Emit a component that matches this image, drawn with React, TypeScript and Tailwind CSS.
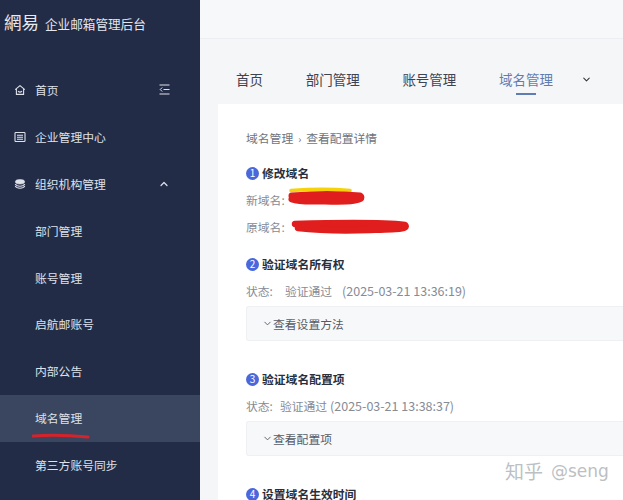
import React from "react";
import { ChevronDown, ChevronUp } from "lucide-react";

const font = { fontFamily: '"Noto Sans CJK SC", "Liberation Sans", sans-serif' };

const menu = [
  { name: "部门管理" },
  { name: "账号管理" },
  { name: "启航邮账号" },
  { name: "内部公告" },
  { name: "域名管理", active: true },
  { name: "第三方账号同步" },
];

const tabs = ["首页", "部门管理", "账号管理", "域名管理"];

function HomeIcon() {
  return (
    <svg width="12" height="12" viewBox="0 0 12 12" fill="none" stroke="currentColor" strokeWidth="1.1" className="mr-[9px]">
      <path d="M1.2 5.6 6 1.6l4.8 4M2.4 4.8v5.6h7.2V4.8" strokeLinejoin="round" />
      <path d="M4.3 7.4c.8.9 2.6.9 3.4 0" strokeLinecap="round" />
    </svg>
  );
}

function PanelIcon() {
  return (
    <svg width="12" height="12" viewBox="0 0 12 12" fill="none" stroke="currentColor" strokeWidth="1.1" className="mr-[9px]">
      <rect x="1" y="1.5" width="10" height="9" rx="0.8" />
      <path d="M3 4.2h6M3 6.2h6M3 8.2h6" />
    </svg>
  );
}

function StackIcon() {
  return (
    <svg width="12" height="12" viewBox="0 0 12 12" fill="none" stroke="currentColor" className="mr-[9px]">
      <ellipse cx="6" cy="3.8" rx="4.6" ry="2.2" fill="currentColor" strokeWidth="0.6" />
      <path d="M1.2 6c.8 1.5 2.6 2.2 4.8 2.2S10 7.5 10.8 6" strokeWidth="1.1" />
      <path d="M1.2 8.1c.8 1.5 2.6 2.2 4.8 2.2s4-.7 4.8-2.2" strokeWidth="1.1" />
    </svg>
  );
}

function CollapseIcon() {
  return (
    <svg width="11" height="11" viewBox="0 0 11 11" fill="none" stroke="currentColor" strokeWidth="1">
      <path d="M0.5 1h10M0.5 10h10M4.5 5.5h6M3.2 3.5 1.2 5.5l2 2" />
    </svg>
  );
}

function StepTitle({ n, title }: { n: number; title: string }) {
  return (
    <div className="flex h-5 items-center gap-[3px]">
      <span className="flex h-[13px] w-[13px] items-center justify-center rounded-full bg-[#4a68dc] text-[10px] leading-none text-white">
        {n}
      </span>
      <span className="text-[11.8px] font-bold text-[#2a2f3c]">{title}</span>
    </div>
  );
}

function Collapse({ label }: { label: string }) {
  return (
    <div className="mt-[5px] flex h-[35px] items-center rounded-l-[3px] border border-r-0 border-[#eef0f3] bg-[#f7f8fa] pl-[15px] text-[11.8px] text-[#555b66]">
      <ChevronDown size={11} strokeWidth={2} className="text-[#555b66]" />
      <span>{label}</span>
    </div>
  );
}

export default function App() {
  return (
    <div className="flex h-[500px] w-[623px] overflow-hidden bg-[#f5f6f8]" style={font}>
      <aside className="flex w-[200px] shrink-0 flex-col bg-[#232c47] text-[11.8px] text-[#dfe2ea]">
        <div className="flex h-[66.5px] items-start gap-[6px] pl-[4px] pt-[9px]">
          <span className="w-[35px] whitespace-nowrap text-[17.5px] leading-[26px] text-[#e8eaf0]" style={{ fontFamily: '"Noto Sans CJK TC", sans-serif' }}>
            網易
          </span>
          <span className="whitespace-nowrap pt-[2px] text-[12.6px] leading-[26px] text-[#e3e6ed]">企业邮箱管理后台</span>
        </div>
        <div className="flex h-[46.875px] items-center pl-[14px] pr-[30px]">
          <HomeIcon />
          <span className="flex-1">首页</span>
          <CollapseIcon />
        </div>
        <div className="flex h-[46.875px] items-center pl-[14px]">
          <PanelIcon />
          <span>企业管理中心</span>
        </div>
        <div className="flex h-[46.875px] items-center pl-[14px] pr-[30px]">
          <StackIcon />
          <span className="flex-1">组织机构管理</span>
          <ChevronUp size={12} strokeWidth={2.4} />
        </div>
        {menu.map((item) => (
          <div
            key={item.name}
            className={`relative flex h-[46.875px] shrink-0 items-center pl-[35px] ${item.active ? "bg-[#3a4560]" : ""}`}
          >
            {item.name}
            {item.active && (
              <svg className="absolute left-[32px] top-[38px]" width="58" height="6" viewBox="0 0 58 6">
                <path d="M1 3 C15 2 35 2 56 4" stroke="#d5232b" strokeWidth="3" fill="none" strokeLinecap="round" />
              </svg>
            )}
          </div>
        ))}
      </aside>

      <main className="relative flex min-w-0 flex-1 flex-col">
        <div className="h-[39px] shrink-0 border-b border-[#eceef1] bg-[#f7f8fa]" />
        <nav className="flex h-[65px] shrink-0 items-center gap-[42.7px] pb-[1px] pl-[36px] pt-[17px] text-[13.5px] text-[#3d4350]">
          {tabs.map((tab) => (
            <span key={tab} className={`relative ${tab === "域名管理" ? "text-[#5f7db3]" : ""}`}>
              {tab}
              {tab === "域名管理" && (
                <span className="absolute bottom-[-5px] left-[17px] h-[1.5px] w-[20px] bg-[#5f7db3]" />
              )}
            </span>
          ))}
          <ChevronDown size={11} strokeWidth={2.2} className="-ml-[15px] text-[#333]" />
        </nav>

        <section className="ml-[18px] flex-1 bg-white pl-[28px] pt-[24px] text-[11.8px] text-[#868b95]">
          <div className="flex h-[20px] items-center text-[#6e737d]">
            <span>域名管理</span>
            <span className="mx-[5px] text-[10px]">›</span>
            <span>查看配置详情</span>
          </div>

          <div className="mt-[15px]">
            <StepTitle n={1} title="修改域名" />
            <div className="mt-[7px] h-[20px] leading-[20px]">新域名:</div>
            <div className="mt-[7px] h-[20px] leading-[20px]">原域名:</div>
          </div>

          <div className="mt-[17px]">
            <StepTitle n={2} title="验证域名所有权" />
            <div className="mt-[7px] flex h-[20px] items-center">
              <span>状态:</span>
              <span className="ml-[12px]">验证通过</span>
              <span className="ml-[10px] text-[12.5px]">(2025-03-21 13:36:19)</span>
            </div>
            <Collapse label="查看设置方法" />
          </div>

          <div className="mt-[28px]">
            <StepTitle n={3} title="验证域名配置项" />
            <div className="mt-[7px] flex h-[20px] items-center">
              <span>状态:</span>
              <span className="ml-[7px]">验证通过</span>
              <span className="ml-[3px] text-[12.5px]">(2025-03-21 13:38:37)</span>
            </div>
            <Collapse label="查看配置项" />
          </div>

          <div className="mt-[28px]">
            <StepTitle n={4} title="设置域名生效时间" />
          </div>
        </section>

        {/* marker scribbles on the screenshot */}
        <svg className="pointer-events-none absolute left-0 top-0" width="423" height="500" viewBox="0 0 423 500">
          <path d="M91 190.5 C110 189 135 189 150 190.5" stroke="#f5d20a" strokeWidth="3.5" fill="none" strokeLinecap="round" />
          <path d="M92 196 C115 194 140 194 160 196 C165 200 150 202 125 201 C110 201 100 202 92 199" stroke="#e01e1e" strokeWidth="7" fill="#e01e1e" strokeLinecap="round" strokeLinejoin="round" />
          <path d="M95 224 C130 223 180 222 205 225 C208 229 200 229 170 230 C140 231 115 230 98 228" stroke="#e01e1e" strokeWidth="6.5" fill="#e01e1e" strokeLinecap="round" strokeLinejoin="round" />
        </svg>

        <div className="pointer-events-none absolute left-[305px] top-[459px] flex items-center leading-[24px] text-[#bcbfc4]">
          <span className="text-[19px]">知乎</span>
          <span className="ml-[8px] text-[17px]" style={{ fontFamily: '"DejaVu Sans", sans-serif' }}>@seng</span>
        </div>
      </main>
    </div>
  );
}
